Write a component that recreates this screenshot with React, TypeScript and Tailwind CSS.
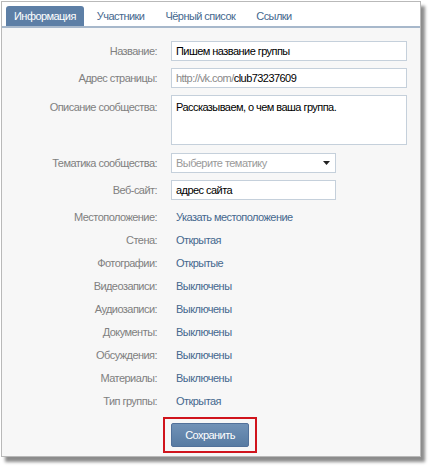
import React from 'react';

const tabs = ['Информация', 'Участники', 'Чёрный список', 'Ссылки'];

const plainRows: [string, string][] = [
  ['Местоположение:', 'Указать местоположение'],
  ['Стена:', 'Открытая'],
  ['Фотографии:', 'Открытые'],
  ['Видеозаписи:', 'Выключены'],
  ['Аудиозаписи:', 'Выключены'],
  ['Документы:', 'Выключены'],
  ['Обсуждения:', 'Выключены'],
  ['Материалы:', 'Выключены'],
  ['Тип группы:', 'Открытая'],
];

function Label({ children, top = false }: { children: React.ReactNode; top?: boolean }) {
  return (
    <div className={`w-[155px] shrink-0 text-right text-[#808080] ${top ? 'pt-[4px]' : ''}`}>
      {children}
    </div>
  );
}

export default function App() {
  return (
    <div className="w-[433px] h-[470px] bg-white pt-px pl-px font-['Liberation_Sans',Arial,sans-serif] text-[11px] leading-[16px] tracking-[-0.55px]">
      <div className="w-[420px] h-[456px] border border-[#b9b9b9] bg-[#f7f7f7] shadow-[4px_5px_3px_rgba(0,0,0,0.45)] flex flex-col">
        {/* tabs */}
        <div className="h-[26px] bg-white border-b-2 border-[#a7b8cb] flex items-end pl-[4px] gap-[5px] shrink-0">
          {tabs.map((t, i) => (
            <div
              key={t}
              className={`h-[20px] px-[8px] flex items-center rounded-t-[3px] ${
                i === 0 ? 'bg-[#5d7fa6] text-white' : 'text-[#45688e]'
              }`}
            >
              {t}
            </div>
          ))}
        </div>

        <div className="flex flex-col pt-[13px]">
          <div className="flex items-center gap-[14px]">
            <Label>Название:</Label>
            <div className="w-[236px] h-[20px] bg-white border border-[#c5d0db] px-[4px] flex items-center text-black">
              Пишем название группы
            </div>
          </div>

          <div className="flex items-center gap-[14px] mt-[7px]">
            <Label>Адрес страницы:</Label>
            <div className="w-[236px] h-[20px] bg-white border border-[#c5d0db] px-[4px] flex items-center">
              <span className="text-[#8a8a8a]">http://vk.com/</span>
              <span className="text-black">club73237609</span>
            </div>
          </div>

          <div className="flex items-start gap-[14px] mt-[7px]">
            <Label top>Описание сообщества:</Label>
            <div className="w-[236px] h-[50px] bg-white border border-[#c5d0db] px-[4px] pt-[3px] text-black">
              Рассказываем, о чем ваша группа.
            </div>
          </div>

          <div className="flex items-center gap-[14px] mt-[8px]">
            <Label>Тематика сообщества:</Label>
            <div className="w-[165px] h-[20px] bg-white border border-[#c5d0db] pl-[4px] pr-[5px] flex items-center justify-between">
              <span className="text-[#9a9a9a]">Выберите тематику</span>
              <svg width="7" height="4" viewBox="0 0 7 4">
                <path d="M0 0h7L3.5 4z" fill="#222" />
              </svg>
            </div>
          </div>

          <div className="flex items-center gap-[14px] mt-[7px]">
            <Label>Веб-сайт:</Label>
            <div className="w-[165px] h-[20px] bg-white border border-[#c5d0db] px-[4px] flex items-center text-black">
              адрес сайта
            </div>
          </div>

          <div className="flex flex-col gap-[7px] mt-[9px]">
            {plainRows.map(([l, v]) => (
              <div key={l} className="flex items-center gap-[14px] h-[16px]">
                <Label>{l}</Label>
                <div className="pl-[5px] text-[#45688e]">{v}</div>
              </div>
            ))}
          </div>

          <div className="flex mt-[8px] pl-[161px]">
            <div className="border-2 border-[#d0141c] px-[6px] py-[4px]">
              <button className="w-[78px] h-[24px] rounded-[2px] border border-[#52719a] bg-gradient-to-b from-[#7192b7] to-[#587ba2] text-white text-[11px] tracking-[-0.55px]">
                Сохранить
              </button>
            </div>
          </div>
        </div>
      </div>
    </div>
  );
}
